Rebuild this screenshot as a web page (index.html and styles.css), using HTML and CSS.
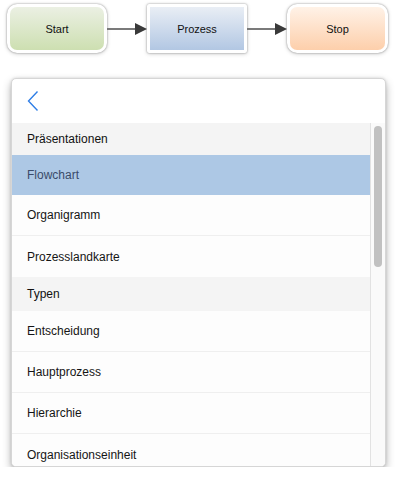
FILE: index.html
```html
<!DOCTYPE html>
<html>
<head>
<meta charset="utf-8">
<link rel="stylesheet" href="styles.css">
</head>
<body>
<div class="diagram">
  <div class="node node-start"><div class="fill">Start</div></div>
  <div class="connector"><span class="line"></span><span class="head"></span></div>
  <div class="node node-process"><div class="fill">Prozess</div></div>
  <div class="connector"><span class="line"></span><span class="head"></span></div>
  <div class="node node-stop"><div class="fill">Stop</div></div>
</div>

<div class="panel">
  <div class="panel-header">
    <svg class="back" width="14" height="22" viewBox="0 0 14 22"><path d="M11.5 1.5 L2.5 11 L11.5 20.5" fill="none" stroke="#2f7ee6" stroke-width="1.4"/></svg>
  </div>
  <div class="panel-body">
    <div class="list">
      <div class="section">Präsentationen</div>
      <div class="item selected">Flowchart</div>
      <div class="item">Organigramm</div>
      <div class="item last">Prozesslandkarte</div>
      <div class="section section-tall">Typen</div>
      <div class="item">Entscheidung</div>
      <div class="item">Hauptprozess</div>
      <div class="item">Hierarchie</div>
      <div class="item last">Organisationseinheit</div>
    </div>
    <div class="scrollbar"><div class="thumb"></div></div>
  </div>
</div>
</body>
</html>
```
FILE: styles.css
```css
html, body {
  margin: 0;
  padding: 0;
  background: #ffffff;
  font-family: "Liberation Sans", Arial, sans-serif;
}

.diagram {
  display: flex;
  align-items: center;
  padding: 4px 0 0 7px;
  height: 49px;
}

.node {
  box-sizing: border-box;
  width: 100px;
  height: 49px;
  padding: 3px;
  background: #ffffff;
  border-radius: 10px;
  box-shadow: 0 0 2px rgba(0,0,0,0.4), 0 1px 4px rgba(0,0,0,0.18);
}

.node .fill {
  height: 100%;
  border-radius: 7px;
  display: flex;
  align-items: center;
  justify-content: center;
  font-size: 11px;
  color: #111;
}

.node-start .fill {
  background: linear-gradient(#ebf0e3, #cddfb1);
}

.node-process {
  border-radius: 2px;
}
.node-process .fill {
  border-radius: 0;
  background: linear-gradient(#e9eef5, #b2c7e3);
}

.node-stop {
  width: 101px;
}
.node-stop .fill {
  background: linear-gradient(#fff2e7, #fdcfab);
}

.connector {
  width: 40px;
  display: flex;
  align-items: center;
  margin-top: 1px;
}
.connector .line {
  flex: 1;
  height: 2px;
  background: #7a7a7a;
}
.connector .head {
  width: 0;
  height: 0;
  border-top: 6px solid transparent;
  border-bottom: 6px solid transparent;
  border-left: 12px solid #3a3a3a;
}

.panel {
  box-sizing: border-box;
  margin: 25px 0 0 11px;
  width: 375px;
  height: 389px;
  background: #ffffff;
  border-radius: 5px;
  border: 1px solid #d6d6d6;
  box-shadow: 0 4px 9px rgba(0,0,0,0.3), 0 0 3px rgba(0,0,0,0.12);
  overflow: hidden;
  display: flex;
  flex-direction: column;
}

.panel-header {
  height: 44px;
  flex: none;
  display: flex;
  align-items: center;
  padding-left: 14px;
}
.back {
  display: block;
}

.panel-body {
  flex: 1;
  display: flex;
  min-height: 0;
}

.list {
  flex: 1;
  overflow: hidden;
  font-size: 12px;
}

.section {
  height: 32px;
  background: #f4f4f4;
  color: #111;
  display: flex;
  align-items: center;
  padding-left: 15px;
}
.section-tall {
  height: 34px;
}

.item {
  box-sizing: border-box;
  height: 41px;
  padding-left: 15px;
  display: flex;
  align-items: center;
  color: #151515;
  border-bottom: 1px solid #efefef;
  background: #fdfdfd;
}
.item.last {
  border-bottom: none;
}
.item.selected {
  height: 40px;
  background: #adc8e5;
  color: #3a4b69;
  border-bottom: none;
}

.scrollbar {
  width: 14px;
  flex: none;
  border-left: 1px solid #e2e2e2;
  background: #fafafa;
  padding-top: 3px;
}
.thumb {
  width: 8px;
  height: 141px;
  margin-left: 3px;
  border-radius: 4px;
  background: #c1c1c1;
}
```
